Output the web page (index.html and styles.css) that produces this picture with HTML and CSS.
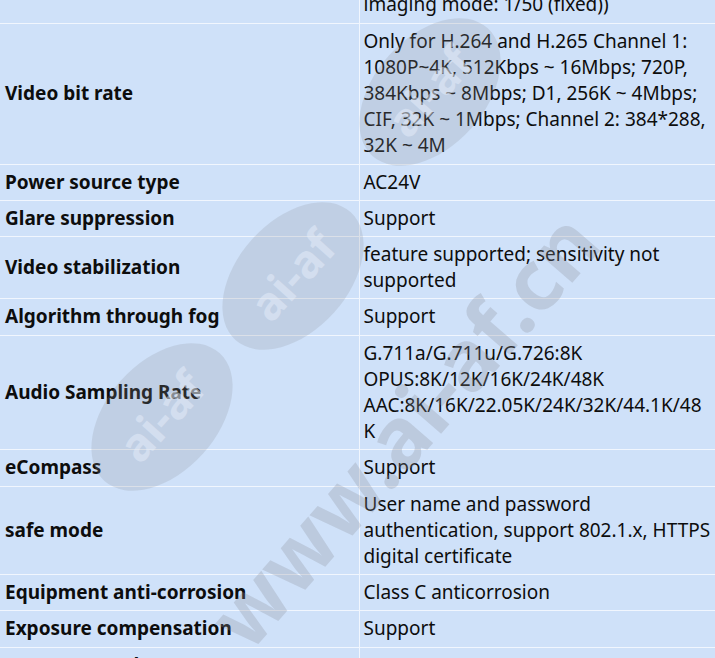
FILE: index.html
```html
<!DOCTYPE html>
<html lang="en">
<head>
    <meta charset="UTF-8">
    <meta name="viewport" content="width=device-width, initial-scale=1.0">
    <title>Specifications</title>
    <link rel="stylesheet" href="styles.css">
</head>
<body>
    <div class="sheet">
        <table class="spec">
            <colgroup>
                <col class="col-label">
                <col class="col-value">
            </colgroup>
            <tbody>
                <tr>
                    <th>Shutter speed</th>
                    <td>1/1s ~ 1/100000s (PAL imaging mode: 1/25 (fixed); NTSC<br>imaging mode: 1/50 (fixed))</td>
                </tr>
                <tr>
                    <th>Video bit rate</th>
                    <td>Only for H.264 and H.265 Channel 1: 1080P~4K, 512Kbps ~ 16Mbps; 720P, 384Kbps ~ 8Mbps; D1, 256K ~ 4Mbps; CIF, 32K ~ 1Mbps; Channel 2: 384*288, 32K ~ 4M</td>
                </tr>
                <tr>
                    <th>Power source type</th>
                    <td>AC24V</td>
                </tr>
                <tr>
                    <th>Glare suppression</th>
                    <td>Support</td>
                </tr>
                <tr>
                    <th>Video stabilization</th>
                    <td>feature supported; sensitivity not supported</td>
                </tr>
                <tr>
                    <th>Algorithm through fog</th>
                    <td>Support</td>
                </tr>
                <tr>
                    <th>Audio Sampling Rate</th>
                    <td>G.711a/G.711u/G.726:8K<br>OPUS:8K/12K/16K/24K/48K<br>AAC:8K/16K/22.05K/24K/32K/44.1K/48K</td>
                </tr>
                <tr>
                    <th>eCompass</th>
                    <td>Support</td>
                </tr>
                <tr>
                    <th>safe mode</th>
                    <td>User name and password authentication, support 802.1.x, HTTPS digital certificate</td>
                </tr>
                <tr>
                    <th>Equipment anti-corrosion</th>
                    <td>Class C anticorrosion</td>
                </tr>
                <tr>
                    <th>Exposure compensation</th>
                    <td>Support</td>
                </tr>
                <tr>
                    <th>Exposure mode</th>
                    <td>Support</td>
                </tr>
            </tbody>
        </table>

        <!-- site watermark laid over the table -->
        <svg class="watermark" width="715" height="658" viewBox="0 0 715 658" aria-hidden="true">
            <g transform="rotate(-48 430 92)">
                <ellipse class="wm-badge" cx="430" cy="92" rx="86" ry="55"></ellipse>
                <text class="wm-badge-text" x="430" y="108">ai-af</text>
            </g>
            <g transform="rotate(-48 293 276)">
                <ellipse class="wm-badge" cx="293" cy="276" rx="86" ry="55"></ellipse>
                <text class="wm-badge-text" x="293" y="292">ai-af</text>
            </g>
            <g transform="rotate(-48 162 417)">
                <ellipse class="wm-badge" cx="162" cy="417" rx="86" ry="55"></ellipse>
                <text class="wm-badge-text" x="162" y="433">ai-af</text>
            </g>
            <text class="wm-url" x="410" y="458" transform="rotate(-49 410 436)">www.ai-af.cn</text>
        </svg>
    </div>
</body>
</html>
```

FILE: styles.css
```css
:root {
    --cell-bg: #cfe1f9;
    --cell-line: #f1f6fe;
    --text-color: #0d0d0d;
}
html, body {
    margin: 0;
    padding: 0;
}
body {
    font-family: "Noto Sans", "Open Sans", sans-serif;
    background: var(--cell-bg);
    color: var(--text-color);
}
.sheet {
    position: relative;
    height: 658px;
    overflow: hidden;
}
.spec {
    width: 100%;
    margin-top: -66px;
    border-collapse: collapse;
    table-layout: fixed;
    font-size: 19px;
    line-height: 26.2px;
}
.col-label {
    width: 359px;
}
.spec th,
.spec td {
    padding: 4px 4px 5px 4px;
    background: var(--cell-bg);
    border-top: 1px solid var(--cell-line);
    border-bottom: 1px solid var(--cell-line);
    vertical-align: middle;
    overflow-wrap: break-word;
}
.spec th {
    padding-left: 5px;
    text-align: left;
    font-weight: 700;
    border-right: 1px solid var(--cell-line);
}
.spec td {
    font-weight: 400;
}
.watermark {
    position: absolute;
    left: 0;
    top: 0;
    pointer-events: none;
}
.wm-badge {
    fill: rgba(140, 145, 155, 0.22);
}
.wm-badge-text {
    fill: rgba(230, 238, 250, 0.5);
    font-family: "Noto Sans", sans-serif;
    font-weight: 700;
    font-size: 46px;
    text-anchor: middle;
}
.wm-url {
    fill: rgba(140, 145, 155, 0.28);
    font-family: "Noto Sans", sans-serif;
    font-weight: 700;
    font-size: 84px;
    text-anchor: middle;
}
```
